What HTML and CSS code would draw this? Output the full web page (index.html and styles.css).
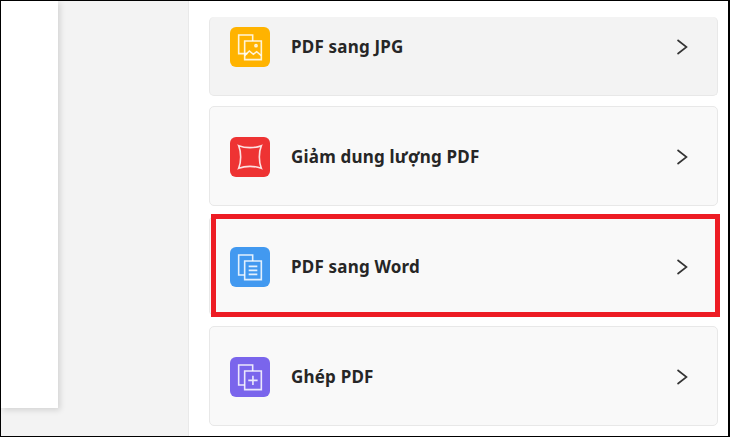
FILE: index.html
```html
<!DOCTYPE html>
<html>
<head>
    <meta name="viewport" content="width=device-width, initial-scale=1.0">
    <link rel="stylesheet" href="styles.css">
</head>
<body>
    <div class="frame">
        <div class="preview">
            <div class="sheet"></div>
        </div>
        <div class="tools">
            <div class="tool tool-first">
                <div class="toolIcon yellow">
                    <svg viewBox="0 0 24 24"><path d="M10 17H3.5V3H14V7.5"/><path d="M8 7.5H20.5V21.5H8Z"/><path d="M8 18.5L11.5 15L14.5 17.5L17 15.5L20.5 18.5"/><circle cx="16.5" cy="11" r="0.8"/></svg>
                </div>
                <div class="toolName">PDF sang JPG</div>
                <svg class="arrow" viewBox="0 0 12 16"><path d="M1.5 1L10.5 8L1.5 15"/></svg>
            </div>
            <div class="tool">
                <div class="toolIcon red">
                    <svg viewBox="0 0 24 24"><path d="M3.5 3.5C8.5 5.5 15.5 5.5 20.5 3.5C18.5 8.5 18.5 15.5 20.5 20.5C15.5 18.5 8.5 18.5 3.5 20.5C5.5 15.5 5.5 8.5 3.5 3.5Z"/></svg>
                </div>
                <div class="toolName">Giảm dung lượng PDF</div>
                <svg class="arrow" viewBox="0 0 12 16"><path d="M1.5 1L10.5 8L1.5 15"/></svg>
            </div>
            <div class="tool marked">
                <div class="toolIcon blue">
                    <svg viewBox="0 0 24 24"><path d="M8 18H3.5V3H14V7.5"/><path d="M8 7.5H20.5V21.5H8Z"/><path d="M11 11.5H17.5M11 14.5H17.5M11 17.5H17.5"/></svg>
                </div>
                <div class="toolName">PDF sang Word</div>
                <svg class="arrow" viewBox="0 0 12 16"><path d="M1.5 1L10.5 8L1.5 15"/></svg>
            </div>
            <div class="tool">
                <div class="toolIcon purple">
                    <svg viewBox="0 0 24 24"><path d="M8 18H3.5V3H14V7.5"/><path d="M8 7.5H20.5V21.5H8Z"/><path d="M14.2 11V18M10.7 14.5H17.7"/></svg>
                </div>
                <div class="toolName">Ghép PDF</div>
                <svg class="arrow" viewBox="0 0 12 16"><path d="M1.5 1L10.5 8L1.5 15"/></svg>
            </div>
        </div>
    </div>
</body>
</html>
```

FILE: styles.css
```css
body {
    margin: 0;
    background: #fff;
    font-family: 'Noto Sans', sans-serif;
}

.frame {
    width: 730px;
    height: 437px;
    box-sizing: border-box;
    border: 1px solid #000;
    border-right-width: 2px;
    display: flex;
    overflow: hidden;
}

.preview {
    width: 187px;
    flex-shrink: 0;
    background: #f3f3f3;
    border-right: 1px solid #e9e9e9;
}

.sheet {
    width: 57px;
    height: 407px;
    background: #fff;
    box-shadow: 2px 2px 6px rgba(0,0,0,0.14);
}

.tools {
    flex: 1;
    padding: 16px 10px 0 20px;
    display: flex;
    flex-direction: column;
    gap: 10px;
}

.tool {
    height: 100px;
    flex-shrink: 0;
    box-sizing: border-box;
    display: flex;
    align-items: center;
    padding: 2px 29px 0 20px;
    background: #f9f9f9;
    border: 1px solid #e8e8e8;
    border-radius: 5px;
    position: relative;
}

.tool-first {
    height: 79px;
    background: #f3f3f3;
    border-top: 0;
    align-items: flex-start;
    padding-top: 10px;
}

.tool-first .toolName {
    margin-top: 8px;
}

.tool-first .arrow {
    margin-top: 12px;
}

.marked::after {
    content: '';
    position: absolute;
    left: 1px;
    top: -3px;
    right: -3px;
    bottom: -2px;
    border: 5px solid #ed1c24;
}

.toolIcon {
    width: 40px;
    height: 40px;
    flex-shrink: 0;
    border-radius: 6px;
    display: flex;
    align-items: center;
    justify-content: center;
}

.toolIcon svg {
    width: 32px;
    height: 32px;
    fill: none;
    stroke: rgba(255,255,255,0.85);
    stroke-width: 1.2;
}

.yellow { background: #ffb300; }
.red { background: #ee3333; }
.blue { background: #4299f0; }
.purple { background: #7a65ec; }

.toolName {
    flex: 1;
    margin-left: 21px;
    margin-bottom: 2px;
    font-size: 17px;
    letter-spacing: 0.2px;
    font-weight: 700;
    color: #262626;
}

.arrow {
    width: 12px;
    height: 16px;
    fill: none;
    stroke: #333;
    stroke-width: 1.6;
}
```
